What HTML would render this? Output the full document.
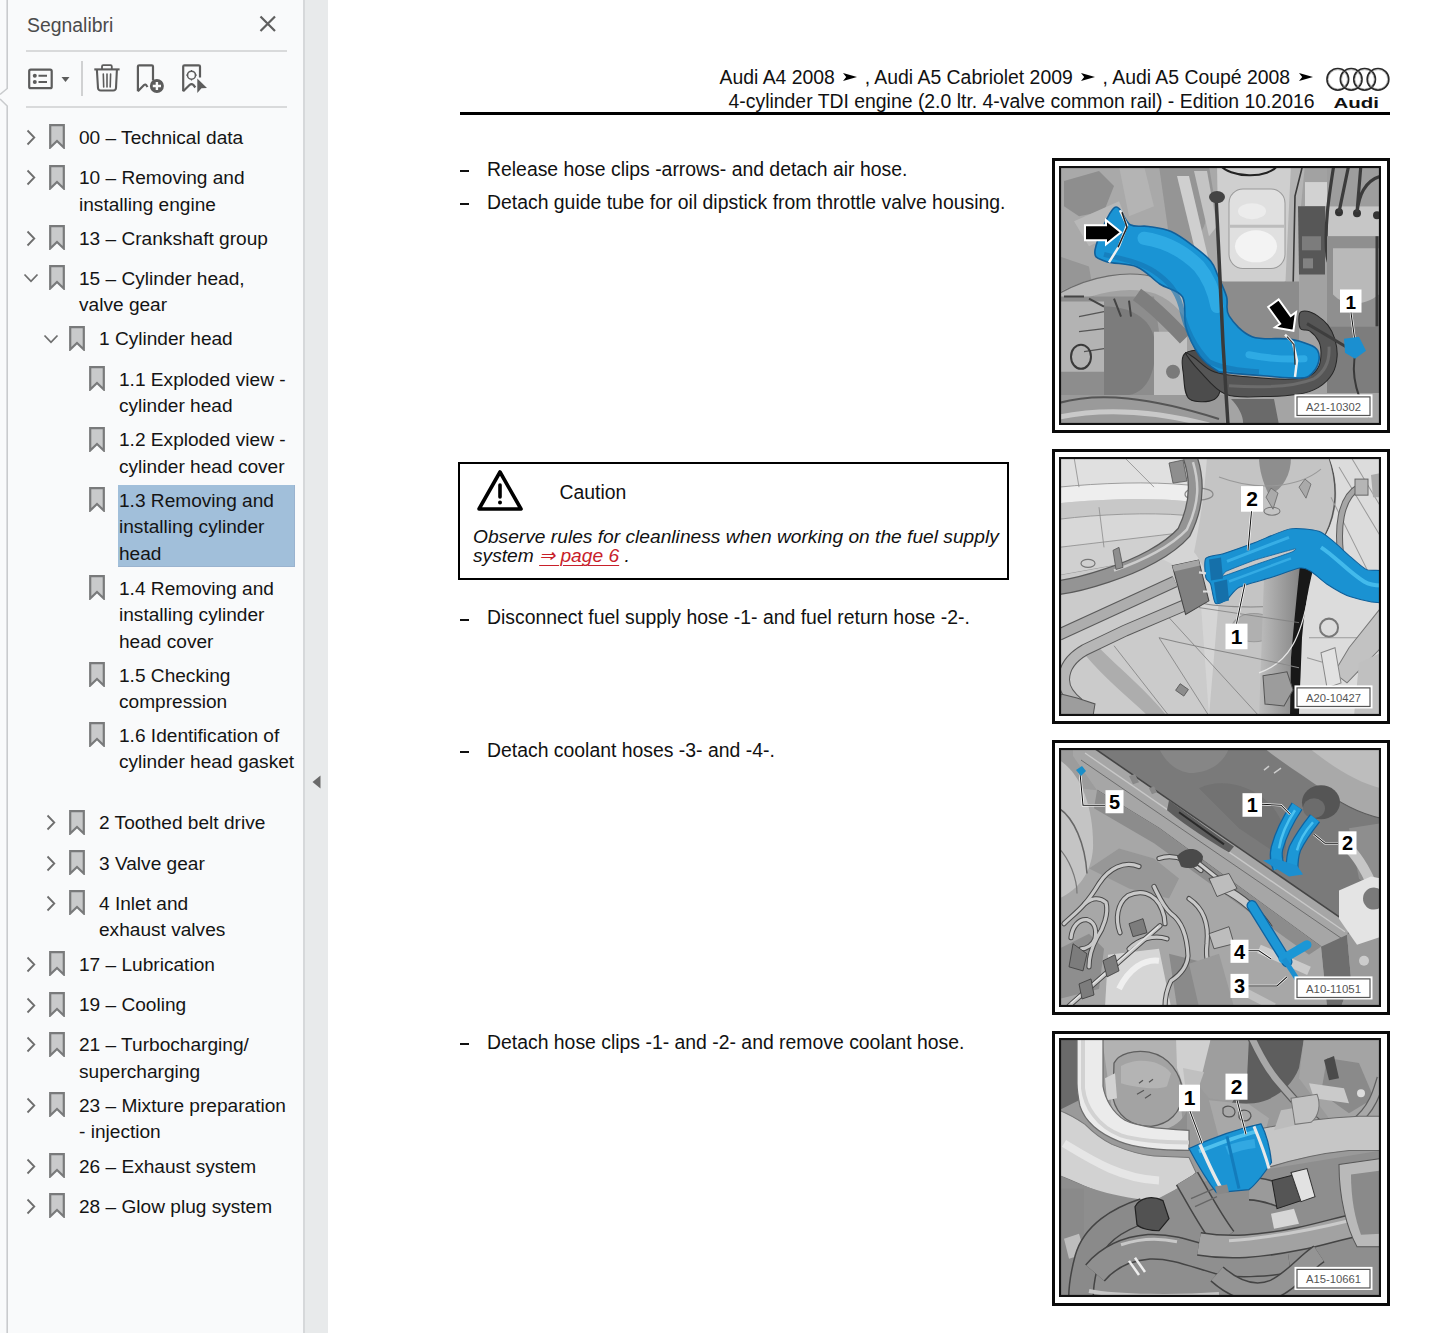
<!DOCTYPE html>
<html><head><meta charset="utf-8">
<style>
html,body{margin:0;padding:0;}
body{width:1445px;height:1333px;position:relative;overflow:hidden;background:#fff;font-family:"Liberation Sans",sans-serif;}
#side{position:absolute;left:0;top:0;width:303px;height:1333px;background:#f9fafb;}
#side .it{position:absolute;font-size:19.1px;line-height:26.5px;color:#141414;white-space:nowrap;}
#side svg{position:absolute;}
.sep{position:absolute;left:26px;width:261px;height:2px;background:#d9dadb;}
#div1{position:absolute;left:303px;top:0;width:2px;height:1333px;background:#d6d8da;}
#div2{position:absolute;left:305px;top:0;width:23px;height:1333px;background:#e8eaeb;}
#page{position:absolute;left:328px;top:0;width:1117px;height:1333px;background:#fff;}
.abs{position:absolute;}
.doc{position:absolute;font-size:19.4px;line-height:22px;color:#111;white-space:nowrap;}
.frame{position:absolute;border:3px solid #0a0a0a;background:#fff;box-sizing:border-box;}
.frame svg{position:absolute;}
</style></head><body>
<div id="side">
<svg style="left:0;top:0" width="10" height="1333" viewBox="0 0 10 1333"><path d="M7.2 0 V88.5 L0 94.5 M0 99 L7.2 106 V1333" fill="none" stroke="#c9cbcd" stroke-width="1.6"/></svg>
<div class="abs" style="left:27px;top:13px;font-size:19.4px;line-height:24px;color:#4b4b4b;">Segnalibri</div>
<svg style="left:258px;top:14px" width="20" height="20" viewBox="0 0 20 20"><path d="M2.5 2.5 L17 17 M17 2.5 L2.5 17" stroke="#5f5f5f" stroke-width="2.2" fill="none"/></svg>
<div class="sep" style="top:50px"></div>
<div class="sep" style="top:106px"></div>
<!-- toolbar -->
<svg style="left:26px;top:66px" width="46" height="26" viewBox="0 0 46 26"><rect x="3.2" y="3.7" width="22.5" height="18.5" rx="1.5" fill="none" stroke="#5c5c5c" stroke-width="2.2"/><circle cx="8.8" cy="9.8" r="2" fill="#5c5c5c"/><circle cx="8.8" cy="16" r="2" fill="#5c5c5c"/><path d="M12.5 9.8 H21 M12.5 16 H21" stroke="#5c5c5c" stroke-width="2"/><path d="M35.5 11 H43.5 L39.5 16 Z" fill="#5c5c5c"/></svg>
<div class="abs" style="left:81px;top:61px;width:1.5px;height:35px;background:#d0d1d2"></div>
<svg style="left:92px;top:62px" width="30" height="32" viewBox="0 0 30 32"><path d="M2.3 7.4 H27.6" stroke="#5c5c5c" stroke-width="2.1"/><path d="M10 7 V4.4 Q10 3.2 11.2 3.2 H18.6 Q19.8 3.2 19.8 4.4 V7" fill="none" stroke="#5c5c5c" stroke-width="1.8"/><path d="M4.9 8 L6 26 Q6.2 28.5 8.8 28.5 H21.2 Q23.8 28.5 24 26 L24.9 8" fill="none" stroke="#5c5c5c" stroke-width="2.1"/><path d="M11.3 12 L11.7 25 M15 12 V25 M18.6 12 L18.2 25" stroke="#5c5c5c" stroke-width="1.6" stroke-linecap="round"/></svg>
<svg style="left:134px;top:62px" width="32" height="34" viewBox="0 0 32 34"><path d="M3.9 29.2 V4.6 Q3.9 3.3 5.2 3.3 H17.7 Q19 3.3 19 4.6 V18.5" fill="none" stroke="#5c5c5c" stroke-width="2.2"/><path d="M3.9 29.2 L10 23 Q11.5 21.8 12.5 23.5 L13.5 25" fill="none" stroke="#5c5c5c" stroke-width="2.2"/><circle cx="22.9" cy="24" r="7" fill="#5c5c5c"/><path d="M22.9 19.9 V28.1 M18.8 24 H27" stroke="#f9fafb" stroke-width="2.4"/></svg>
<svg style="left:178px;top:62px" width="32" height="34" viewBox="0 0 32 34"><path d="M5.2 29.2 V4.6 Q5.2 3.3 6.5 3.3 H20.7 Q22 3.3 22 4.6 V15.5" fill="none" stroke="#5c5c5c" stroke-width="2.2"/><path d="M5.2 29.2 L11.5 23 Q13.5 21.3 15.5 23 L17.3 25.5" fill="none" stroke="#5c5c5c" stroke-width="2.2"/><circle cx="13.5" cy="13.2" r="4" fill="none" stroke="#5c5c5c" stroke-width="1.6"/><path d="M13.5 8 V9.5 M13.5 17 V18.4 M8.3 13.2 H9.7 M17.3 13.2 H18.7" stroke="#5c5c5c" stroke-width="1.2"/><path d="M19.3 16.5 L29 26 L23.5 26.3 L19.3 30.9 Z" fill="#5c5c5c"/></svg>
<!-- highlight -->
<div class="abs" style="left:117.5px;top:485px;width:177.7px;height:81.5px;background:#a1bfda;box-shadow:inset -1px -1px 0 #9ab3cf;"></div>

<svg class="chev" style="left:26px;top:129.1px" width="10" height="17" viewBox="0 0 10 17"><path d="M1.5 1.5 L8.3 8.5 L1.5 15.5" fill="none" stroke="#6e6e6e" stroke-width="1.8"/></svg>
<svg class="bm" style="left:49px;top:124.3px" width="16" height="25" viewBox="0 0 16 25"><path d="M1.2 1.2 H14.8 V23.5 L8 17 L1.2 23.5 Z" fill="#c9cacb" stroke="#797a7b" stroke-width="2.2" stroke-linejoin="miter"/></svg>
<div class="it" style="left:79px;top:124.9px">00 – Technical data</div>
<svg class="chev" style="left:26px;top:169.3px" width="10" height="17" viewBox="0 0 10 17"><path d="M1.5 1.5 L8.3 8.5 L1.5 15.5" fill="none" stroke="#6e6e6e" stroke-width="1.8"/></svg>
<svg class="bm" style="left:49px;top:164.5px" width="16" height="25" viewBox="0 0 16 25"><path d="M1.2 1.2 H14.8 V23.5 L8 17 L1.2 23.5 Z" fill="#c9cacb" stroke="#797a7b" stroke-width="2.2" stroke-linejoin="miter"/></svg>
<div class="it" style="left:79px;top:165.1px">10 – Removing and<br>installing engine</div>
<svg class="chev" style="left:26px;top:230.0px" width="10" height="17" viewBox="0 0 10 17"><path d="M1.5 1.5 L8.3 8.5 L1.5 15.5" fill="none" stroke="#6e6e6e" stroke-width="1.8"/></svg>
<svg class="bm" style="left:49px;top:225.2px" width="16" height="25" viewBox="0 0 16 25"><path d="M1.2 1.2 H14.8 V23.5 L8 17 L1.2 23.5 Z" fill="#c9cacb" stroke="#797a7b" stroke-width="2.2" stroke-linejoin="miter"/></svg>
<div class="it" style="left:79px;top:225.8px">13 – Crankshaft group</div>
<svg class="chev" style="left:23px;top:273.3px" width="16" height="10" viewBox="0 0 16 10"><path d="M1.5 1.5 L8 8.3 L14.5 1.5" fill="none" stroke="#6e6e6e" stroke-width="1.8"/></svg>
<svg class="bm" style="left:49px;top:265.0px" width="16" height="25" viewBox="0 0 16 25"><path d="M1.2 1.2 H14.8 V23.5 L8 17 L1.2 23.5 Z" fill="#c9cacb" stroke="#797a7b" stroke-width="2.2" stroke-linejoin="miter"/></svg>
<div class="it" style="left:79px;top:265.6px">15 – Cylinder head,<br>valve gear</div>
<svg class="chev" style="left:43px;top:334.1px" width="16" height="10" viewBox="0 0 16 10"><path d="M1.5 1.5 L8 8.3 L14.5 1.5" fill="none" stroke="#6e6e6e" stroke-width="1.8"/></svg>
<svg class="bm" style="left:69px;top:325.8px" width="16" height="25" viewBox="0 0 16 25"><path d="M1.2 1.2 H14.8 V23.5 L8 17 L1.2 23.5 Z" fill="#c9cacb" stroke="#797a7b" stroke-width="2.2" stroke-linejoin="miter"/></svg>
<div class="it" style="left:99px;top:326.4px">1 Cylinder head</div>
<svg class="bm" style="left:89px;top:366.0px" width="16" height="25" viewBox="0 0 16 25"><path d="M1.2 1.2 H14.8 V23.5 L8 17 L1.2 23.5 Z" fill="#c9cacb" stroke="#797a7b" stroke-width="2.2" stroke-linejoin="miter"/></svg>
<div class="it" style="left:119px;top:366.6px">1.1 Exploded view -<br>cylinder head</div>
<svg class="bm" style="left:89px;top:426.7px" width="16" height="25" viewBox="0 0 16 25"><path d="M1.2 1.2 H14.8 V23.5 L8 17 L1.2 23.5 Z" fill="#c9cacb" stroke="#797a7b" stroke-width="2.2" stroke-linejoin="miter"/></svg>
<div class="it" style="left:119px;top:427.3px">1.2 Exploded view -<br>cylinder head cover</div>
<svg class="bm" style="left:89px;top:487.2px" width="16" height="25" viewBox="0 0 16 25"><path d="M1.2 1.2 H14.8 V23.5 L8 17 L1.2 23.5 Z" fill="#c9cacb" stroke="#797a7b" stroke-width="2.2" stroke-linejoin="miter"/></svg>
<div class="it" style="left:119px;top:487.8px">1.3 Removing and<br>installing cylinder<br>head</div>
<svg class="bm" style="left:89px;top:575.2px" width="16" height="25" viewBox="0 0 16 25"><path d="M1.2 1.2 H14.8 V23.5 L8 17 L1.2 23.5 Z" fill="#c9cacb" stroke="#797a7b" stroke-width="2.2" stroke-linejoin="miter"/></svg>
<div class="it" style="left:119px;top:575.8px">1.4 Removing and<br>installing cylinder<br>head cover</div>
<svg class="bm" style="left:89px;top:662.1px" width="16" height="25" viewBox="0 0 16 25"><path d="M1.2 1.2 H14.8 V23.5 L8 17 L1.2 23.5 Z" fill="#c9cacb" stroke="#797a7b" stroke-width="2.2" stroke-linejoin="miter"/></svg>
<div class="it" style="left:119px;top:662.7px">1.5 Checking<br>compression</div>
<svg class="bm" style="left:89px;top:722.2px" width="16" height="25" viewBox="0 0 16 25"><path d="M1.2 1.2 H14.8 V23.5 L8 17 L1.2 23.5 Z" fill="#c9cacb" stroke="#797a7b" stroke-width="2.2" stroke-linejoin="miter"/></svg>
<div class="it" style="left:119px;top:722.8px">1.6 Identification of<br>cylinder head gasket</div>
<svg class="chev" style="left:46px;top:814.3px" width="10" height="17" viewBox="0 0 10 17"><path d="M1.5 1.5 L8.3 8.5 L1.5 15.5" fill="none" stroke="#6e6e6e" stroke-width="1.8"/></svg>
<svg class="bm" style="left:69px;top:809.5px" width="16" height="25" viewBox="0 0 16 25"><path d="M1.2 1.2 H14.8 V23.5 L8 17 L1.2 23.5 Z" fill="#c9cacb" stroke="#797a7b" stroke-width="2.2" stroke-linejoin="miter"/></svg>
<div class="it" style="left:99px;top:810.1px">2 Toothed belt drive</div>
<svg class="chev" style="left:46px;top:855.0px" width="10" height="17" viewBox="0 0 10 17"><path d="M1.5 1.5 L8.3 8.5 L1.5 15.5" fill="none" stroke="#6e6e6e" stroke-width="1.8"/></svg>
<svg class="bm" style="left:69px;top:850.2px" width="16" height="25" viewBox="0 0 16 25"><path d="M1.2 1.2 H14.8 V23.5 L8 17 L1.2 23.5 Z" fill="#c9cacb" stroke="#797a7b" stroke-width="2.2" stroke-linejoin="miter"/></svg>
<div class="it" style="left:99px;top:850.8px">3 Valve gear</div>
<svg class="chev" style="left:46px;top:895.1px" width="10" height="17" viewBox="0 0 10 17"><path d="M1.5 1.5 L8.3 8.5 L1.5 15.5" fill="none" stroke="#6e6e6e" stroke-width="1.8"/></svg>
<svg class="bm" style="left:69px;top:890.3px" width="16" height="25" viewBox="0 0 16 25"><path d="M1.2 1.2 H14.8 V23.5 L8 17 L1.2 23.5 Z" fill="#c9cacb" stroke="#797a7b" stroke-width="2.2" stroke-linejoin="miter"/></svg>
<div class="it" style="left:99px;top:890.9px">4 Inlet and<br>exhaust valves</div>
<svg class="chev" style="left:26px;top:955.9px" width="10" height="17" viewBox="0 0 10 17"><path d="M1.5 1.5 L8.3 8.5 L1.5 15.5" fill="none" stroke="#6e6e6e" stroke-width="1.8"/></svg>
<svg class="bm" style="left:49px;top:951.1px" width="16" height="25" viewBox="0 0 16 25"><path d="M1.2 1.2 H14.8 V23.5 L8 17 L1.2 23.5 Z" fill="#c9cacb" stroke="#797a7b" stroke-width="2.2" stroke-linejoin="miter"/></svg>
<div class="it" style="left:79px;top:951.7px">17 – Lubrication</div>
<svg class="chev" style="left:26px;top:996.6px" width="10" height="17" viewBox="0 0 10 17"><path d="M1.5 1.5 L8.3 8.5 L1.5 15.5" fill="none" stroke="#6e6e6e" stroke-width="1.8"/></svg>
<svg class="bm" style="left:49px;top:991.8px" width="16" height="25" viewBox="0 0 16 25"><path d="M1.2 1.2 H14.8 V23.5 L8 17 L1.2 23.5 Z" fill="#c9cacb" stroke="#797a7b" stroke-width="2.2" stroke-linejoin="miter"/></svg>
<div class="it" style="left:79px;top:992.4px">19 – Cooling</div>
<svg class="chev" style="left:26px;top:1036.3px" width="10" height="17" viewBox="0 0 10 17"><path d="M1.5 1.5 L8.3 8.5 L1.5 15.5" fill="none" stroke="#6e6e6e" stroke-width="1.8"/></svg>
<svg class="bm" style="left:49px;top:1031.5px" width="16" height="25" viewBox="0 0 16 25"><path d="M1.2 1.2 H14.8 V23.5 L8 17 L1.2 23.5 Z" fill="#c9cacb" stroke="#797a7b" stroke-width="2.2" stroke-linejoin="miter"/></svg>
<div class="it" style="left:79px;top:1032.1px">21 – Turbocharging/<br>supercharging</div>
<svg class="chev" style="left:26px;top:1097.1px" width="10" height="17" viewBox="0 0 10 17"><path d="M1.5 1.5 L8.3 8.5 L1.5 15.5" fill="none" stroke="#6e6e6e" stroke-width="1.8"/></svg>
<svg class="bm" style="left:49px;top:1092.3px" width="16" height="25" viewBox="0 0 16 25"><path d="M1.2 1.2 H14.8 V23.5 L8 17 L1.2 23.5 Z" fill="#c9cacb" stroke="#797a7b" stroke-width="2.2" stroke-linejoin="miter"/></svg>
<div class="it" style="left:79px;top:1092.9px">23 – Mixture preparation<br>- injection</div>
<svg class="chev" style="left:26px;top:1158.2px" width="10" height="17" viewBox="0 0 10 17"><path d="M1.5 1.5 L8.3 8.5 L1.5 15.5" fill="none" stroke="#6e6e6e" stroke-width="1.8"/></svg>
<svg class="bm" style="left:49px;top:1153.4px" width="16" height="25" viewBox="0 0 16 25"><path d="M1.2 1.2 H14.8 V23.5 L8 17 L1.2 23.5 Z" fill="#c9cacb" stroke="#797a7b" stroke-width="2.2" stroke-linejoin="miter"/></svg>
<div class="it" style="left:79px;top:1154.0px">26 – Exhaust system</div>
<svg class="chev" style="left:26px;top:1198.2px" width="10" height="17" viewBox="0 0 10 17"><path d="M1.5 1.5 L8.3 8.5 L1.5 15.5" fill="none" stroke="#6e6e6e" stroke-width="1.8"/></svg>
<svg class="bm" style="left:49px;top:1193.4px" width="16" height="25" viewBox="0 0 16 25"><path d="M1.2 1.2 H14.8 V23.5 L8 17 L1.2 23.5 Z" fill="#c9cacb" stroke="#797a7b" stroke-width="2.2" stroke-linejoin="miter"/></svg>
<div class="it" style="left:79px;top:1194.0px">28 – Glow plug system</div>
</div>
<div id="div1"></div>
<div id="div2"></div>
<svg style="position:absolute;left:311px;top:774px" width="10" height="16" viewBox="0 0 10 16"><path d="M9.5 1.5 V14.5 L1.5 8 Z" fill="#6a6a6a"/></svg>

<!-- page header -->
<div class="doc" id="h1" style="right:130.5px;top:66.3px;text-align:right">Audi A4 2008 <svg class="arr" width="14" height="8" viewBox="0 0 14 8" style="position:relative;display:inline-block;vertical-align:3px;margin:0 2px 0 3px"><path d="M0 0 L14 4 L0 8 L3.2 4 Z" fill="#000"/></svg> , Audi A5 Cabriolet 2009 <svg class="arr" width="14" height="8" viewBox="0 0 14 8" style="position:relative;display:inline-block;vertical-align:3px;margin:0 2px 0 3px"><path d="M0 0 L14 4 L0 8 L3.2 4 Z" fill="#000"/></svg> , Audi A5 Coupé 2008 <svg class="arr" width="14" height="8" viewBox="0 0 14 8" style="position:relative;display:inline-block;vertical-align:3px;margin:0 2px 0 3px"><path d="M0 0 L14 4 L0 8 L3.2 4 Z" fill="#000"/></svg></div>
<div class="doc" id="h2" style="right:130.5px;top:90px;text-align:right">4-cylinder TDI engine (2.0 ltr. 4-valve common rail) - Edition 10.2016</div>
<div class="abs" style="left:459.5px;top:111.6px;width:930.5px;height:3px;background:#000"></div>
<!-- bullets -->
<div class="abs" style="left:460.4px;top:170.2px;width:9px;height:2.1px;background:#111"></div><div class="doc" style="left:487px;top:158.4px">Release hose clips -arrows- and detach air hose.</div>
<div class="abs" style="left:460.4px;top:202.7px;width:9px;height:2.1px;background:#111"></div><div class="doc" style="left:487px;top:190.9px">Detach guide tube for oil dipstick from throttle valve housing.</div>
<div class="abs" style="left:460.4px;top:618.8px;width:9px;height:2.1px;background:#111"></div><div class="doc" style="left:487px;top:606.4px">Disconnect fuel supply hose -1- and fuel return hose -2-.</div>
<div class="abs" style="left:460.4px;top:751.2px;width:9px;height:2.1px;background:#111"></div><div class="doc" style="left:487px;top:739.4px">Detach coolant hoses -3- and -4-.</div>
<div class="abs" style="left:460.4px;top:1042.6px;width:9px;height:2.1px;background:#111"></div><div class="doc" style="left:487px;top:1030.6px">Detach hose clips -1- and -2- and remove coolant hose.</div>
<!-- caution -->
<div class="abs" style="left:457.9px;top:462.4px;width:551.2px;height:117.4px;border:2.7px solid #000;box-sizing:border-box;"></div>
<svg style="position:absolute;left:476px;top:469px" width="48" height="43" viewBox="0 0 48 43"><path d="M24 3 L45 40 H3 Z" fill="none" stroke="#000" stroke-width="3.6" stroke-linejoin="round"/><path d="M24 16 V28" stroke="#000" stroke-width="3.6" stroke-linecap="round"/><circle cx="24" cy="33.5" r="2" fill="#000"/></svg>
<div class="doc" style="left:559.5px;top:481.4px">Caution</div>
<div class="doc" style="left:473px;top:527px;font-size:19.2px;font-style:italic;line-height:19.3px">Observe rules for cleanliness when working on the fuel supply<br>system <span style="color:#c8202a;text-decoration:underline;text-underline-offset:3px;text-decoration-thickness:1.3px">⇒ page 6</span> .</div>
<!-- audi logo -->
<svg style="position:absolute;left:1324px;top:65px" width="68" height="46" viewBox="0 0 68 46">
<g fill="none" stroke="#2a2a2a" stroke-width="1.7"><circle cx="13.8" cy="14.3" r="10.8"/><circle cx="27.2" cy="14.3" r="10.8"/><circle cx="40.6" cy="14.3" r="10.8"/><circle cx="54" cy="14.3" r="10.8"/></g>
<g fill="none" stroke="#9a9a9a" stroke-width="0.6"><circle cx="13.8" cy="14.3" r="9.6"/><circle cx="27.2" cy="14.3" r="9.6"/><circle cx="40.6" cy="14.3" r="9.6"/><circle cx="54" cy="14.3" r="9.6"/></g>
<text x="9.5" y="42.5" font-family="Liberation Sans" font-weight="bold" font-size="15.5" fill="#111" textLength="45.5" lengthAdjust="spacingAndGlyphs">Audi</text>
</svg>

<div class="frame" style="left:1052px;top:158px;width:338px;height:275.4px"><div style="position:absolute;left:4.4px;top:4.7px;width:322px;height:259px;overflow:hidden"><svg width="322" height="259" viewBox="0 0 322 258" preserveAspectRatio="none">
<rect width="322" height="258" fill="#a2a2a2"/>
<!-- top-left busy area -->
<path d="M0 0 H160 V120 H0 Z" fill="#a9a9a9"/>
<path d="M5 15 L40 5 L55 20 L45 45 L20 50 L5 40 Z" fill="#8e8e8e"/>
<path d="M15 55 L60 35 L70 60 L30 80 Z" fill="#b8b8b8"/>
<path d="M60 0 H85 L95 40 L70 50 Z" fill="#b4b4b4"/>
<path d="M100 0 L150 0 L155 30 L145 60 L130 90 L110 70 Z" fill="#959595"/>
<path d="M118 10 L130 10 L150 95 L140 100 Z" fill="#cfcfcf"/>
<path d="M135 5 L148 5 L158 60 L150 70 Z" fill="#c4c4c4"/>
<path d="M0 90 L30 100 L35 130 L0 150 Z" fill="#969696"/>
<!-- light gray hose left-middle -->
<path d="M0 135 C30 118 70 110 100 120 C120 128 135 145 140 165" fill="none" stroke="#b9b9b9" stroke-width="16"/>
<path d="M0 135 C30 118 70 110 100 120 C120 128 135 145 140 165" fill="none" stroke="#6c6c6c" stroke-width="1.2" transform="translate(0,-8)"/>
<!-- reservoir -->
<path d="M158 -2 H232 L236 30 L231 112 L216 121 L172 121 L160 112 Z" fill="#cfcfcf"/>
<path d="M160 -2 C170 12 210 14 220 -2" fill="none" stroke="#222" stroke-width="2"/>
<rect x="170" y="23" width="56" height="79" rx="14" fill="#e0e0e0" stroke="#9a9a9a" stroke-width="1"/>
<path d="M171 60 H225" stroke="#bdbdbd" stroke-width="3"/>
<ellipse cx="197" cy="80" rx="21" ry="16" fill="#f3f3f3"/>
<ellipse cx="193" cy="45" rx="14" ry="8" fill="#ececec"/>
<!-- channel right of reservoir -->
<path d="M232 -2 H246 L242 40 L240 125 H226 Z" fill="#b4b4b4"/>
<path d="M244 -2 L236 30 L234 125" fill="none" stroke="#3a3a3a" stroke-width="1.6"/>
<!-- light box -->
<path d="M246 16 H272 V40 H246 Z" fill="#d2d2d2"/>
<!-- dark connector -->
<path d="M239 40 H266 V108 H240 Z" fill="#575757"/>
<rect x="243" y="70" width="19" height="14" fill="#7c7c7c"/>
<rect x="244" y="92" width="10" height="10" fill="#828282"/>
<!-- ABS unit -->
<path d="M270 40 H322 V70 H268 Z" fill="#c6c6c6"/>
<path d="M268 -2 H322 V40 H268 Z" fill="#9d9d9d"/>
<circle cx="280" cy="46" r="4" fill="#333"/><circle cx="298" cy="47" r="4" fill="#333"/><circle cx="318" cy="49" r="4" fill="#333"/>
<path d="M275 -2 C270 30 265 60 268 90 C270 105 285 110 290 100 V75" fill="none" stroke="#3b3b3b" stroke-width="3.2"/>
<path d="M290 -2 L280 46 M302 -2 L298 46 M322 10 C305 15 300 30 298 46" fill="none" stroke="#3b3b3b" stroke-width="3.2"/>
<!-- right middle region -->
<path d="M268 70 H322 V160 H268 Z" fill="#8f8f8f"/>
<path d="M274 82 H320 V128 C305 140 285 140 274 128 Z" fill="#b9b9b9"/>
<path d="M318 70 V160" stroke="#3b3b3b" stroke-width="3"/>
<!-- between reservoir and dark hose -->
<path d="M160 115 H240 V175 H172 Z" fill="#8c8c8c"/>
<!-- alternator -->
<path d="M0 130 L95 130 L110 235 L0 235 Z" fill="#8d8d8d"/>
<path d="M0 135 H45 V205 H0 Z" fill="#b3b3b3"/>
<path d="M45 140 C70 140 92 150 96 175 C98 200 90 225 70 228 L45 228 Z" fill="#7c7c7c"/>
<path d="M20 150 L45 145 M20 165 L45 162 M25 185 L45 182" stroke="#555" stroke-width="1.2"/>
<ellipse cx="22" cy="190" rx="10" ry="12" fill="none" stroke="#3a3a3a" stroke-width="2"/>
<path d="M5 130 L25 130 M30 132 L45 140 M55 132 L62 150 M70 134 L72 150" stroke="#444" stroke-width="2"/>
<!-- light center-bottom area -->
<path d="M95 165 H128 V232 H95 Z" fill="#c2c2c2"/>
<circle cx="114" cy="205" r="7" fill="#7a7a7a"/>
<!-- bottom strip -->
<path d="M0 228 H170 V258 H0 Z" fill="#9a9a9a"/>
<path d="M0 236 C40 225 90 230 160 252" fill="none" stroke="#555" stroke-width="2"/>
<path d="M0 250 C50 240 100 245 150 258" fill="none" stroke="#c9c9c9" stroke-width="5"/>
<!-- grey hose above alternator -->
<path d="M78 128 C95 140 110 155 126 172" fill="none" stroke="#7e7e7e" stroke-width="14"/>
<!-- dark vertical piece -->
<path d="M126 188 L150 182 L160 215 L155 232 L130 232 Z" fill="#4f4f4f"/>
<!-- bottom right -->
<path d="M166 226 H322 V258 H166 Z" fill="#a4a4a4"/>
<path d="M172 232 C180 240 185 250 184 258 L220 258 L215 232 Z" fill="#6a6a6a"/>
<path d="M268 160 H322 V226 H268 Z" fill="#7d7d7d"/>
<path d="M300 175 C290 200 295 225 310 250" fill="none" stroke="#3a3a3a" stroke-width="2"/>
<!-- dark hose -->
<path d="M126.6 186.3 C132.4 182.5 153.6 181.6 159.6 186.3 C165.6 191.0 163.3 206.6 162.6 214.3 C161.9 222.0 160.9 229.3 155.6 232.3 C150.3 235.3 135.8 236.1 130.6 232.3 C125.4 228.5 125.3 217.0 124.6 209.3 C123.9 201.6 120.8 190.1 126.6 186.3 Z" fill="#4c4c4c" stroke="#222" stroke-width="1"/>
<path d="M126.6 186.3 C127.4 188.5 133.9 197.5 140.6 204.3 C147.3 211.2 155.9 223.2 166.6 227.4 C177.3 231.6 192.5 229.7 204.6 229.7 C216.7 229.7 229.8 228.9 239.0 227.4 C248.2 225.9 253.8 224.0 259.6 220.5 C265.3 217.0 270.4 211.9 273.5 206.7 C276.6 201.5 277.7 195.2 278.1 189.5 C278.5 183.8 277.3 177.5 275.8 172.3 C274.3 167.1 271.8 162.3 268.9 158.5 C266.0 154.7 262.0 151.6 258.6 149.3 C255.1 147.0 251.2 145.1 248.2 144.7 C245.2 144.3 241.7 144.1 240.6 147.0 C239.4 149.9 239.6 159.0 241.3 161.9 C242.9 164.8 247.4 162.1 250.5 164.2 C253.6 166.3 257.8 170.9 259.7 174.5 C261.6 178.1 262.0 181.8 262.0 186.0 C262.0 190.2 261.6 196.0 259.7 199.8 C257.8 203.6 255.3 206.9 250.5 209.0 C245.7 211.1 240.6 212.1 230.6 212.3 C220.6 212.5 203.1 211.5 190.6 210.3 C178.1 209.1 164.8 208.5 155.6 205.3 C146.4 202.1 140.4 194.5 135.6 191.3 C130.8 188.1 125.8 184.1 126.6 186.3 Z" fill="#555" stroke="#262626" stroke-width="1"/>
<path d="M170 219 C200 221 235 220 255 212 C266 205 271 195 270 180" fill="none" stroke="#6c6c6c" stroke-width="3"/>
<path d="M248 157 L287 180" stroke="#3e3e3e" stroke-width="3"/>
<!-- blue hose -->
<path d="M55.4 41.4 C61.2 37.3 65.5 55.4 71.2 58.5 C76.9 61.6 82.6 59.1 89.4 60.2 C96.2 61.3 104.5 62.0 112.1 65.3 C119.7 68.6 128.2 75.1 134.8 80.0 C141.4 84.9 147.8 90.0 151.8 94.8 C155.8 99.6 156.0 102.7 158.6 108.6 C161.2 114.5 165.7 123.5 167.6 130.3 C169.5 137.1 165.8 142.7 170.1 149.3 C174.3 155.9 183.1 166.2 193.1 170.0 C203.0 173.8 220.2 171.0 229.8 172.3 C239.4 173.6 245.8 176.1 250.6 178.0 C255.4 179.9 257.1 180.8 258.6 183.7 C260.1 186.6 260.6 191.5 259.6 195.3 C258.6 199.1 255.8 204.0 252.8 206.7 C249.7 209.4 249.3 210.9 241.3 211.3 C233.3 211.7 217.0 209.9 204.6 209.0 C192.1 208.1 174.4 206.5 166.6 205.6 C158.7 204.7 161.8 206.3 157.5 203.5 C153.2 200.7 145.6 195.9 140.5 188.7 C135.4 181.5 129.7 170.0 126.9 160.3 C124.1 150.6 127.8 137.4 123.5 130.3 C119.2 123.2 108.4 122.5 100.8 117.5 C93.2 112.5 87.2 104.3 78.1 100.5 C69.0 96.7 53.3 97.7 46.3 94.8 C39.3 92.0 34.6 92.3 36.1 83.4 C37.6 74.5 49.5 45.6 55.4 41.4 Z" fill="#1a94d4" stroke="#12609a" stroke-width="1.6"/>
<path d="M85 72 C105 75 125 85 140 100 C150 112 155 125 158 140" fill="none" stroke="#36b2ea" stroke-width="13" stroke-linecap="round" opacity="0.75"/>
<path d="M190 188 C210 192 228 193 245 192" fill="none" stroke="#36b2ea" stroke-width="7" stroke-linecap="round" opacity="0.75"/>
<path d="M45 88 C60 92 80 95 95 105 C110 115 118 125 122 140 C126 160 135 180 150 195 C165 202 180 204 200 205" fill="none" stroke="#1473b0" stroke-width="5" opacity="0.6"/>
<!-- clips -->
<path d="M61 44 L68 59 L60 80 L50 96" fill="none" stroke="#f0f0f0" stroke-width="2.5"/>
<path d="M63 46 L68 61 L59 81" fill="none" stroke="#222" stroke-width="1.5"/>
<path d="M226 168 L234 176 L238 194 L236 210" fill="none" stroke="#f0f0f0" stroke-width="2.5"/>
<path d="M228 170 L235 178 L236 198" fill="none" stroke="#333" stroke-width="1.3"/>
<!-- dipstick -->
<path d="M157 30 L159.5 80 L164 177 L169 258" fill="none" stroke="#3a3a3a" stroke-width="3.5"/>
<ellipse cx="158" cy="31" rx="8" ry="6" fill="#444"/>
<!-- arrows -->
<path d="M26 59 L47 59 L47 54 L62 66 L47 78 L47 74 L26 74 Z" fill="#000" stroke="#fff" stroke-width="2"/>
<g transform="translate(234.4,164.2) rotate(54)"><path d="M0 0 L-13.5 -13 L-13.5 -6.5 L-34 -6.5 L-34 6.5 L-13.5 6.5 L-13.5 13 Z" fill="#000" stroke="#fff" stroke-width="2"/></g>
<!-- label 1 -->
<rect x="281" y="123" width="21.5" height="23" fill="#fff"/>
<text x="291.8" y="142" font-family="Liberation Sans" font-weight="bold" font-size="19" text-anchor="middle" fill="#000">1</text>
<path d="M292 146 L296 175" stroke="#fff" stroke-width="2.4"/><path d="M292 146 L296 175" stroke="#111" stroke-width="1"/>
<path d="M285 172 L300 170 L307 184 L296 192 L286 186 Z" fill="#1b8fd0"/>
<!-- label box -->
<rect x="235.5" y="227.5" width="78" height="23" fill="#fff"/>
<rect x="238" y="230" width="73" height="18.5" fill="#fff" stroke="#555" stroke-width="1.2"/>
<text x="274.5" y="244" font-family="Liberation Sans" font-size="11" text-anchor="middle" fill="#555" textLength="55" lengthAdjust="spacingAndGlyphs">A21-10302</text>
<rect x="1" y="1" width="320" height="256" fill="none" stroke="#111" stroke-width="2.2"/>
</svg>
</div></div>
<div class="frame" style="left:1052px;top:449px;width:338px;height:275.4px"><div style="position:absolute;left:4.4px;top:4.7px;width:322px;height:259px;overflow:hidden"><svg width="322" height="259" viewBox="0 0 322 258" preserveAspectRatio="none">
<defs>
<linearGradient id="g2s" x1="0" y1="0" x2="1" y2="0"><stop offset="0" stop-color="#bdbdbd"/><stop offset="0.6" stop-color="#8a8a8a"/><stop offset="1" stop-color="#3a3a3a"/></linearGradient>
</defs>
<rect width="322" height="258" fill="#d5d5d5"/>
<!-- top light bands -->
<path d="M0 0 H130 V28 C90 24 40 26 0 30 Z" fill="#e0e0e0"/>
<path d="M0 30 C40 26 90 24 130 28 L128 44 C90 40 40 42 0 46 Z" fill="#eeeeee"/>
<path d="M0 46 C40 42 90 40 128 44 L125 58 C90 55 40 57 0 62 Z" fill="#c8c8c8"/>
<path d="M0 62 C40 57 90 55 125 58 L118 76 L0 90 Z" fill="#d8d8d8"/>
<path d="M0 90 L118 76 L100 100 L0 118 Z" fill="#d0d0d0"/>
<path d="M15 0 L20 30 M65 0 L95 30 M0 30 C40 26 90 24 130 28 M0 62 C40 57 90 55 125 58 M0 90 L118 76 M0 118 L100 100 M40 50 L45 90" fill="none" stroke="#8c8c8c" stroke-width="0.8"/>
<ellipse cx="29" cy="106" rx="7" ry="4" fill="none" stroke="#777" stroke-width="1.2"/>
<!-- tank blob -->
<path d="M148 0 H270 C282 30 280 60 262 85 C250 110 240 140 236 175 L236 258 H150 L160 140 C150 120 140 100 135 95 C142 60 146 30 148 0 Z" fill="#c4c4c4"/>
<path d="M200 0 H232 C232 18 224 32 210 38 C204 26 200 12 200 0 Z" fill="#8e8e8e"/>
<path d="M160 20 C200 35 240 30 262 12" fill="none" stroke="#999" stroke-width="1"/>
<path d="M262 85 C278 60 280 30 270 0" fill="none" stroke="#555" stroke-width="1.5"/>
<ellipse cx="140" cy="37" rx="14" ry="6" fill="none" stroke="#888" stroke-width="1.2"/>
<path d="M207 40 L212 31 L219 36 L214 52 Z" fill="#aaaaaa" stroke="#666" stroke-width="0.8"/>
<path d="M240 30 L246 22 L252 27 L247 41 Z" fill="#aaaaaa" stroke="#666" stroke-width="0.8"/>
<ellipse cx="213" cy="54" rx="8" ry="4" fill="none" stroke="#777" stroke-width="1"/>
<path d="M140 145 C160 150 200 150 236 148" fill="none" stroke="#888" stroke-width="1"/>
<ellipse cx="195" cy="170" rx="22" ry="14" fill="#b0b0b0" stroke="#999" stroke-width="1"/>
<!-- shadow gradient + dark band -->
<path d="M205 120 L262 85 C252 115 246 145 243 180 L240 258 H200 Z" fill="url(#g2s)"/>
<path d="M256 100 C250 135 246 170 243 200 L240 258 H231 L232 200 C235 165 238 135 241 108 Z" fill="#181818"/>
<path d="M250 135 C242 180 230 205 200 215" fill="none" stroke="#e6e6e6" stroke-width="1.2"/>
<!-- right region -->
<path d="M270 0 H322 V258 H240 L243 180 C246 145 252 115 262 85 C280 60 282 30 270 0 Z" fill="#dcdcdc"/>
<path d="M280 10 L322 80 M292 0 L322 50 M272 40 L322 140 M250 180 H322 M248 200 L300 215" stroke="#9a9a9a" stroke-width="1"/>
<path d="M300 30 C282 40 276 70 284 112" fill="none" stroke="#5e5e5e" stroke-width="7"/>
<path d="M300 30 C282 40 276 70 284 112" fill="none" stroke="#a6a6a6" stroke-width="5"/>
<rect x="296" y="22" width="13" height="16" fill="#b5b5b5" stroke="#666" stroke-width="1"/>
<path d="M312 18 L322 16 V40 L314 40 Z" fill="#aaa"/>
<path d="M322 150 L290 190 L275 215 L288 225 L322 190 Z" fill="#c2c2c2" stroke="#777" stroke-width="1"/>
<circle cx="270" cy="170" r="9" fill="none" stroke="#777" stroke-width="2"/>
<path d="M262 195 L276 190 L282 225 L268 230 Z" fill="#e2e2e2" stroke="#888" stroke-width="1"/>
<path d="M300 205 L322 195 V258 H295 Z" fill="#c0c0c0"/>
<!-- fitting blob -->
<path d="M204 218 L228 214 L234 232 L225 248 L206 246 Z" fill="#9c9c9c" stroke="#555" stroke-width="1"/>
<!-- lower-left background -->
<path d="M0 118 L100 100 L140 120 L150 258 H0 Z" fill="#cbcbcb"/>
<path d="M26 197 C45 220 70 240 89 258 L108 258 C90 235 60 210 40 190 Z" fill="#adadad"/>
<path d="M55 188 L110 258 M110 160 L200 258 M100 180 L150 258 M140 150 L240 165" stroke="#808080" stroke-width="0.8"/>
<path d="M100 180 C140 190 200 200 240 210" fill="none" stroke="#888" stroke-width="1"/>
<rect x="118" y="228" width="10" height="8" transform="rotate(35 123 232)" fill="#8c8c8c" stroke="#555" stroke-width="0.8"/>
<!-- gray hose -->
<path d="M131 0 C138 20 140 45 125 75 C110 92 80 108 48 118 C30 124 15 128 0 130" fill="none" stroke="#5a5a5a" stroke-width="15"/>
<path d="M131 0 C138 20 140 45 125 75 C110 92 80 108 48 118 C30 124 15 128 0 130" fill="none" stroke="#949494" stroke-width="12.5"/>
<path d="M134 5 C140 25 141 45 128 72 C113 88 85 103 55 113" fill="none" stroke="#d2d2d2" stroke-width="2.5" opacity="0.9"/>
<path d="M110 6 L124 3 L128 24 L114 26 Z" fill="#8e8e8e" stroke="#555" stroke-width="0.8"/>
<path d="M54 93 L60 90 L64 110 L57 112 Z" fill="#8e8e8e" stroke="#555" stroke-width="0.8"/>
<!-- tubes -->
<path d="M0 177 L116 124" stroke="#5a5a5a" stroke-width="12"/>
<path d="M0 177 L116 124" stroke="#adadad" stroke-width="10"/>
<path d="M125 148 L66 173 L26 192 C12 200 5 210 5 222 C5 232 12 240 20 246" fill="none" stroke="#5a5a5a" stroke-width="12"/>
<path d="M125 148 L66 173 L26 192 C12 200 5 210 5 222 C5 232 12 240 20 246" fill="none" stroke="#b6b6b6" stroke-width="10"/>
<path d="M2 236 L18 240 L36 246 L34 258 H0 Z" fill="#9d9d9d" stroke="#555" stroke-width="1"/>
<!-- connector block -->
<path d="M113.3 108.3 L139.6 102.6 L149.9 143.3 L126.6 156.8 Z" fill="#808080" stroke="#444" stroke-width="1"/>
<path d="M113.3 108.3 L139.6 102.6 L141 108 L115 114 Z" fill="#a5a5a5"/>
<!-- blue hoses -->
<path d="M146.8 101.0 C148.8 98.2 158.5 98.2 164.3 96.3 C170.1 94.4 188.3 88.0 196.1 85.1 C203.9 82.2 223.7 72.9 231.1 71.6 C238.5 70.3 254.6 72.4 259.8 74.0 C265.0 75.6 271.9 82.1 275.6 85.1 C279.3 88.1 287.9 96.3 291.6 99.5 C295.3 102.7 303.6 110.4 307.5 112.2 C311.4 114.0 322.6 110.9 324.6 114.6 L324.6 144.3 C320.7 147.2 298.2 141.4 291.6 139.3 C285.0 137.2 272.3 129.5 267.7 126.5 C263.1 123.5 255.0 115.7 251.8 113.8 C248.6 111.9 245.2 109.9 240.6 110.6 C236.0 111.3 219.0 117.9 212.0 120.1 C205.0 122.3 185.4 127.1 180.2 129.7 C175.0 132.3 170.2 140.5 167.4 142.4 C164.6 144.3 158.1 147.5 156.3 145.6 C154.5 143.7 152.7 129.5 151.6 126.5 C150.5 123.5 147.4 123.1 146.8 120.1 C146.2 117.1 144.8 103.8 146.8 101.0 Z" fill="#1a92d2" stroke="#0f5f99" stroke-width="1"/>
<path d="M164.3 118.6 C166.2 118.2 191.5 109.0 196.1 107.4 C200.7 105.8 230.0 95.8 232.7 94.7 C235.4 93.6 238.3 91.0 235.9 91.5 C233.5 92.0 200.7 101.1 196.1 102.6 C191.5 104.1 169.5 112.7 167.4 113.8 C165.3 114.9 162.4 119.0 164.3 118.6 Z" fill="#c8c8c8" stroke="#0f5f99" stroke-width="0.8"/>
<path d="M168 104 L230 80" stroke="#3fb6ec" stroke-width="3" opacity="0.8"/>
<path d="M170 124 L232 101" stroke="#3fb6ec" stroke-width="2.5" opacity="0.7"/>
<path d="M262 90 C275 98 290 115 305 124 C312 128 318 128 322 128" fill="none" stroke="#4cc4f2" stroke-width="4" opacity="0.8"/>
<path d="M150 102 L162 100 L164 121 L152 123 Z" fill="#1570aa"/><path d="M155 125 L168 122 L170 143 L158 146 Z" fill="#1570aa"/>
<path d="M140 115 L147 116 M144 134 L152 134" stroke="#ddd" stroke-width="2.2"/>
<!-- labels -->
<rect x="182" y="29" width="22" height="25.5" fill="#fff"/>
<text x="193" y="49" font-family="Liberation Sans" font-weight="bold" font-size="21" text-anchor="middle" fill="#000">2</text>
<path d="M192.5 54 L189 93" stroke="#fff" stroke-width="2.4"/><path d="M192.5 54 L189 93" stroke="#111" stroke-width="1"/>
<rect x="166.5" y="166" width="22" height="25.5" fill="#fff"/>
<text x="177.5" y="186" font-family="Liberation Sans" font-weight="bold" font-size="21" text-anchor="middle" fill="#000">1</text>
<path d="M186 126 L177.5 166" stroke="#fff" stroke-width="2.4"/><path d="M186 126 L177.5 166" stroke="#111" stroke-width="1"/>
<rect x="235.5" y="227.5" width="78" height="23" fill="#fff"/>
<rect x="238" y="230" width="73" height="18.5" fill="#fff" stroke="#555" stroke-width="1.2"/>
<text x="274.5" y="244" font-family="Liberation Sans" font-size="11" text-anchor="middle" fill="#555" textLength="55" lengthAdjust="spacingAndGlyphs">A20-10427</text>
<rect x="1" y="1" width="320" height="256" fill="none" stroke="#111" stroke-width="2.2"/>
</svg>
</div></div>
<div class="frame" style="left:1052px;top:740px;width:338px;height:275.4px"><div style="position:absolute;left:4.4px;top:4.7px;width:322px;height:259px;overflow:hidden"><svg width="322" height="259" viewBox="0 0 322 258" preserveAspectRatio="none">
<rect width="322" height="258" fill="#9c9c9c"/>
<!-- upper dark area -->
<path d="M25 0 H322 V210 Z" fill="#7a7a7a"/>
<path d="M100 0 H170 C165 15 150 25 130 25 C115 22 105 12 100 0 Z" fill="#868686"/>
<path d="M140 40 C160 30 190 35 210 55 C225 70 230 90 225 110 L180 80 Z" fill="#727272"/>
<!-- upper right light -->
<path d="M205 0 H322 V70 C300 65 280 55 262 40 C240 25 220 12 205 0 Z" fill="#a9a9a9"/>
<path d="M250 0 H322 V40 C300 35 275 20 250 0 Z" fill="#bdbdbd"/>
<path d="M262 40 C280 55 300 65 322 70" fill="none" stroke="#5a5a5a" stroke-width="1.2"/>
<path d="M290 80 L322 75 V150 L300 130 Z" fill="#8e8e8e"/>
<path d="M290 100 C300 110 312 130 322 160" fill="none" stroke="#c6c6c6" stroke-width="10"/>
<path d="M205 22 L210 18 M215 25 L222 20" stroke="#ccc" stroke-width="1.5"/>
<!-- grommet -->
<ellipse cx="262" cy="54" rx="19" ry="17" fill="#555"/>
<ellipse cx="255" cy="60" rx="11" ry="10" fill="#6c6c6c"/>
<!-- beam -->
<path d="M14 -2 H32 L290 175 L288 190 L262 198 L100 80 L38 42 L14 8 Z" fill="#a6a6a6"/>
<path d="M32 -2 L290 175" stroke="#454545" stroke-width="1.6"/>
<path d="M26 5 L286 183" stroke="#c8c8c8" stroke-width="1.4"/>
<path d="M22 12 L283 190" stroke="#666" stroke-width="0.9"/>
<path d="M38 42 L100 80 L262 198" fill="none" stroke="#6a6a6a" stroke-width="1.2"/>
<path d="M110 52 C135 70 155 85 175 98 L170 104 C150 92 130 80 108 62 Z" fill="#5d5d5d"/>
<path d="M120 64 L165 96" stroke="#2a2a2a" stroke-width="2"/>
<path d="M70 28 L76 26 L80 34 L74 36 Z M90 40 L95 38 L98 44 L93 46 Z" fill="#888"/>
<!-- beam end dark vertical face -->
<path d="M262 198 L288 186 L292 230 L282 258 H268 Z" fill="#6e6e6e"/>
<!-- lower engine clutter -->
<path d="M0 150 L2 38 L38 42 L100 80 L262 198 L268 258 H0 Z" fill="#a7a7a7"/>
<path d="M38 42 L100 80 L262 198 L250 206 L95 95 L35 60 Z" fill="#8c8c8c"/>
<path d="M30 120 L60 100 L95 110 L120 130 L110 150 L70 140 Z" fill="#979797"/>
<path d="M0 200 L30 185 L45 200 L40 240 L0 250 Z" fill="#8e8e8e"/>
<path d="M49 206 L100 200 L112 258 H46 Z" fill="#d6d6d6"/>
<path d="M60 240 C70 220 85 210 100 212" fill="none" stroke="#efefef" stroke-width="6"/>
<path d="M110 205 L150 215 L165 258 H118 Z" fill="#8a8a8a"/>
<g fill="none" stroke-linecap="round" stroke-linejoin="round">
<g stroke="#4a4a4a" stroke-width="5.2">
<path d="M10 257 L101 177"/>
<path d="M26 155 C32 150 40 148 47 154 C50 165 44 180 38 189 C33 198 30 208 30 218"/>
<path d="M61 184 C56 170 58 155 69 147 C80 142 95 142 103 161 C106 168 106 172 106 175"/>
<path d="M12 189 C13 178 20 170 28 171 C35 173 38 180 36 190 C34 196 28 200 22 200"/>
<path d="M95 138 C100 148 104 158 112 165 C122 172 128 185 129 207 C128 220 118 228 112 232 C108 240 106 250 106 258"/>
<path d="M5 175 C15 165 25 160 40 135 C50 120 65 112 80 118"/>
<path d="M70 200 C80 190 95 186 108 190"/>
<path d="M130 150 C145 160 150 175 148 195 C146 210 150 225 160 240"/>
<path d="M100 110 C115 105 130 112 142 122"/>
</g>
<g stroke="#c9c9c9" stroke-width="3.2">
<path d="M10 257 L101 177"/>
<path d="M26 155 C32 150 40 148 47 154 C50 165 44 180 38 189 C33 198 30 208 30 218"/>
<path d="M61 184 C56 170 58 155 69 147 C80 142 95 142 103 161 C106 168 106 172 106 175"/>
<path d="M12 189 C13 178 20 170 28 171 C35 173 38 180 36 190 C34 196 28 200 22 200"/>
<path d="M95 138 C100 148 104 158 112 165 C122 172 128 185 129 207 C128 220 118 228 112 232 C108 240 106 250 106 258"/>
<path d="M5 175 C15 165 25 160 40 135 C50 120 65 112 80 118"/>
<path d="M70 200 C80 190 95 186 108 190"/>
<path d="M130 150 C145 160 150 175 148 195 C146 210 150 225 160 240"/>
<path d="M100 110 C115 105 130 112 142 122"/>
</g>
<path d="M12 254 L99 178" stroke="#e6e6e6" stroke-width="1.2"/>
</g>
<path d="M14 195 L28 205 L24 222 L10 218 Z M44 212 L56 206 L60 222 L48 228 Z M20 235 L32 230 L35 246 L23 250 Z M70 175 L84 170 L88 184 L74 188 Z" fill="#7c7c7c" stroke="#3a3a3a" stroke-width="0.8"/>
<path d="M118 108 C125 98 140 98 144 108 C144 118 132 122 122 118 Z" fill="#4a4a4a"/>
<path d="M140 115 L165 135" stroke="#4a4a4a" stroke-width="5"/><path d="M140 115 L165 135" stroke="#d0d0d0" stroke-width="3"/>
<path d="M165 140 C185 150 200 165 210 180" fill="none" stroke="#4a4a4a" stroke-width="9"/>
<path d="M165 140 C185 150 200 165 210 180" fill="none" stroke="#c8c8c8" stroke-width="7"/>
<path d="M150 130 L170 125 L178 140 L158 148 Z" fill="#bdbdbd" stroke="#444" stroke-width="0.8"/>
<path d="M150 185 L170 178 L175 195 L155 200 Z" fill="#bdbdbd" stroke="#444" stroke-width="0.8"/>
<path d="M130 215 L160 205 L175 258 H140 Z" fill="#9a9a9a"/>
<!-- left drum -->
<path d="M0 12 C22 25 35 60 34 100 C32 125 20 140 0 150 Z" fill="#c4c4c4"/>
<path d="M0 60 C15 70 26 95 28 125" fill="none" stroke="#666" stroke-width="1.5"/>
<path d="M0 100 C10 110 18 130 18 145" fill="none" stroke="#777" stroke-width="1.2"/>
<!-- right lower region -->
<path d="M288 186 L322 170 V258 H282 L292 230 Z" fill="#9a9a9a"/>
<path d="M280 142 L312 128 L322 130 V188 L298 196 L280 170 Z" fill="#e4e4e4"/>
<circle cx="315" cy="150" r="11" fill="#7a7a7a"/>
<circle cx="305" cy="212" r="5" fill="#cccccc"/>
<!-- light tubes near lower hose -->
<path d="M200 200 L250 222" stroke="#cbcbcb" stroke-width="9"/>
<path d="M180 240 L215 258" stroke="#c0c0c0" stroke-width="8"/>
<!-- blue hoses top -->
<path d="M238 58 C230 70 222 85 218 100 C216 108 218 114 220 120" fill="none" stroke="#0f63a0" stroke-width="13"/>
<path d="M238 58 C230 70 222 85 218 100 C216 108 218 114 220 120" fill="none" stroke="#1c97d6" stroke-width="10.5"/>
<path d="M236 62 C228 74 222 88 220 100" fill="none" stroke="#4cc2f0" stroke-width="2.5"/>
<path d="M256 70 C248 80 240 92 236 100 C233 108 233 115 233 121" fill="none" stroke="#0f63a0" stroke-width="13"/>
<path d="M256 70 C248 80 240 92 236 100 C233 108 233 115 233 121" fill="none" stroke="#1c97d6" stroke-width="10.5"/>
<path d="M254 74 C246 83 240 94 238 102" fill="none" stroke="#4cc2f0" stroke-width="2.5"/>
<path d="M204 112 L216 110 L238 117 L244 126 L230 128 Z" fill="#1b8fd0"/>
<!-- blue hose bottom -->
<path d="M193 157 L228 213" stroke="#0f63a0" stroke-width="11" stroke-linecap="round"/>
<path d="M193 157 L228 213" stroke="#1c97d6" stroke-width="8.5" stroke-linecap="round"/>
<path d="M224 210 L248 196" stroke="#1c97d6" stroke-width="9" stroke-linecap="round"/>
<path d="M225 210 L238 230" stroke="#1b8fd0" stroke-width="5"/>
<!-- label leaders -->
<path d="M21 25 L24 57 L46 57" fill="none" stroke="#fff" stroke-width="2.4"/><path d="M21 25 L24 57 L46 57" fill="none" stroke="#111" stroke-width="1"/>
<path d="M17 22 L23 18 L27 23 L22 28 Z" fill="#1a8ec8"/>
<path d="M203 56 L222 57 L231 66" fill="none" stroke="#fff" stroke-width="2.4"/><path d="M203 56 L222 57 L231 66" fill="none" stroke="#111" stroke-width="1"/>
<path d="M279 95 L266 95 L255 86" fill="none" stroke="#fff" stroke-width="2.4"/><path d="M279 95 L266 95 L255 86" fill="none" stroke="#111" stroke-width="1"/>
<path d="M189 202 L200 202 L212 210" fill="none" stroke="#fff" stroke-width="2.4"/><path d="M189 202 L200 202 L212 210" fill="none" stroke="#111" stroke-width="1"/>
<path d="M189 237 L218 237 L228 228" fill="none" stroke="#fff" stroke-width="2.4"/><path d="M189 237 L218 237 L228 228" fill="none" stroke="#111" stroke-width="1"/>
<!-- labels -->
<rect x="46.5" y="42" width="18" height="23" fill="#fff"/>
<text x="55.5" y="61" font-family="Liberation Sans" font-weight="bold" font-size="20" text-anchor="middle" fill="#000">5</text>
<rect x="183.5" y="45" width="19.5" height="23.5" fill="#fff"/>
<text x="193.3" y="64" font-family="Liberation Sans" font-weight="bold" font-size="20" text-anchor="middle" fill="#000">1</text>
<rect x="279.5" y="83" width="18" height="23" fill="#fff"/>
<text x="288.5" y="102" font-family="Liberation Sans" font-weight="bold" font-size="20" text-anchor="middle" fill="#000">2</text>
<rect x="171.5" y="191" width="18" height="23" fill="#fff"/>
<text x="180.5" y="210" font-family="Liberation Sans" font-weight="bold" font-size="20" text-anchor="middle" fill="#000">4</text>
<rect x="171.5" y="225" width="18" height="24" fill="#fff"/>
<text x="180.5" y="244" font-family="Liberation Sans" font-weight="bold" font-size="20" text-anchor="middle" fill="#000">3</text>
<rect x="235.5" y="227.5" width="78" height="23" fill="#fff"/>
<rect x="238" y="230" width="73" height="18.5" fill="#fff" stroke="#555" stroke-width="1.2"/>
<text x="274.5" y="244" font-family="Liberation Sans" font-size="11" text-anchor="middle" fill="#555" textLength="55" lengthAdjust="spacingAndGlyphs">A10-11051</text>
<rect x="1" y="1" width="320" height="256" fill="none" stroke="#111" stroke-width="2.2"/>
</svg>
</div></div>
<div class="frame" style="left:1052px;top:1030.6px;width:338px;height:275.4px"><div style="position:absolute;left:4.4px;top:4.7px;width:322px;height:259px;overflow:hidden"><svg width="322" height="259" viewBox="0 0 322 258" preserveAspectRatio="none">
<rect width="322" height="258" fill="#9a9a9a"/>
<!-- left dark strip -->
<path d="M0 0 H20 V62 L0 72 Z" fill="#6a6a6a"/>
<!-- upper-middle area behind cap -->
<path d="M43 0 H120 V50 L125 95 L55 85 Z" fill="#b2b2b2"/>
<path d="M52 70 C60 85 80 92 100 92 C115 90 124 82 128 72 L128 95 L60 95 Z" fill="#8e8e8e"/>
<path d="M55 25 C60 15 75 12 90 14 C110 18 122 35 124 55 C122 75 110 86 92 88 C72 88 58 78 54 60 Z" fill="#a3a3a3" stroke="#5f5f5f" stroke-width="1.3"/>
<path d="M62 28 C75 20 100 20 112 35 L108 48 C100 52 80 50 62 45 Z" fill="#b4b4b4"/>
<path d="M80 45 L84 42 M90 44 L94 41 M78 56 L85 52 M86 60 L92 56" stroke="#555" stroke-width="1.2"/>
<path d="M46 40 L56 35 L58 60 L48 62 Z" fill="#d2d2d2"/>
<!-- right bracket -->
<path d="M117 0 H152 L148 30 L140 48 L125 50 L118 30 Z" fill="#d0d0d0"/>
<path d="M152 0 H192 L190 66 L150 60 L140 48 Z" fill="#9e9e9e"/>
<path d="M124 30 L145 34 L140 48 L126 47 Z" fill="#c0c0c0"/>
<!-- dark big shape top -->
<path d="M190 0 H245 L240 30 C232 50 215 62 195 65 L172 66 L188 40 Z" fill="#5e5e5e"/>
<!-- upper right mixed -->
<path d="M245 0 H322 V90 L270 80 L240 40 Z" fill="#a4a4a4"/>
<path d="M268 20 L300 25 L315 60 L290 75 L262 55 Z" fill="#8a8a8a"/>
<path d="M265 22 L275 18 L280 40 L270 42 Z" fill="#4a4a4a"/>
<path d="M250 45 L285 50 L290 65 L255 60 Z" fill="#cacaca"/>
<circle cx="302" cy="55" r="4" fill="#ddd"/>
<path d="M150 62 L190 66 L210 80 L205 98 L160 100 Z" fill="#a8a8a8"/>
<path d="M164 70 C168 66 176 68 176 74 C175 80 166 80 164 75 Z M180 74 C184 70 192 72 192 78 C190 84 182 84 180 79 Z" fill="none" stroke="#555" stroke-width="1.2"/>
<!-- thin gray pipe -->
<path d="M193 0 C200 15 208 30 218 42 C235 62 255 85 270 92 C285 96 305 80 314 62 C318 54 320 46 322 40" fill="none" stroke="#5d5d5d" stroke-width="9"/>
<path d="M193 0 C200 15 208 30 218 42 C235 62 255 85 270 92 C285 96 305 80 314 62 C318 54 320 46 322 40" fill="none" stroke="#a8a8a8" stroke-width="6.5"/>
<!-- light pipe right of coupler -->
<path d="M195 92 C225 85 260 80 300 78 L322 78 V112 L290 112 C260 115 235 120 200 132 Z" fill="#c6c6c6" stroke="#6a6a6a" stroke-width="1"/>
<path d="M215 92 L240 86 L245 68 L222 72 Z" fill="#bcbcbc"/>
<path d="M232 60 L258 56 C262 66 260 78 252 84 L236 86 Z" fill="#c2c2c2" stroke="#777" stroke-width="1"/>
<!-- big light pipe from left -->
<path d="M0 72 C10 76 20 82 26 86 C35 95 45 102 53 106 C70 113 85 117 95 117.5 L130 119 L137 134 C130 142 125 146 122 148 C110 156 100 161 95 162 C80 162 70 161 60 160 C45 156 35 152 26 148 C15 143 8 140 0 137 Z" fill="#d2d2d2" stroke="#777" stroke-width="1"/>
<path d="M5 105 C30 120 60 140 100 142" fill="none" stroke="#e6e6e6" stroke-width="8"/>
<!-- white pipe -->
<path d="M18 0 H44 V48 C46 60 53 74 66 82 C78 88 95 90 130 92 L130 112 C100 112 75 109 60 103 C40 95 26 83 21 68 C19 58 18 50 18 45 Z" fill="#ebebeb" stroke="#6e6e6e" stroke-width="1.2"/>
<path d="M24 0 V50 C26 68 38 88 62 97 C78 102 105 104 130 104" fill="none" stroke="#d2d2d2" stroke-width="4"/>
<!-- lower area -->
<path d="M0 137 C20 145 45 158 95 162 L122 148 L200 132 L322 112 V258 H0 Z" fill="#8e8e8e"/>
<path d="M0 150 L25 150 L25 258 H0 Z" fill="#8a8a8a"/>
<path d="M5 200 L20 195 L26 215 L10 220 Z" fill="#bdbdbd"/>
<!-- hose from dark seg down-left -->
<path d="M85 172 C60 180 35 195 28 220 C24 235 22 248 22 258" fill="none" stroke="#444" stroke-width="26"/>
<path d="M85 172 C60 180 35 195 28 220 C24 235 22 248 22 258" fill="none" stroke="#8a8a8a" stroke-width="23"/>
<!-- hose B under -->
<path d="M36 234 C48 220 65 210 90 208 C115 207 135 216 160 223 C175 227 200 226 230 222" fill="none" stroke="#444" stroke-width="26"/>
<path d="M36 234 C48 220 65 210 90 208 C115 207 135 216 160 223 C175 227 200 226 230 222" fill="none" stroke="#8f8f8f" stroke-width="23"/>
<path d="M62 206 C80 200 100 199 118 203" fill="none" stroke="#c8c8c8" stroke-width="3"/>
<path d="M70 222 L80 236 M76 219 L86 233" stroke="#eee" stroke-width="2.5"/>
<path d="M30 252 C60 258 120 258 160 255" fill="none" stroke="#c6c6c6" stroke-width="4"/>
<!-- hose F from coupler bottom -->
<path d="M128 140 C140 160 150 180 165 200" fill="none" stroke="#444" stroke-width="26"/>
<path d="M128 140 C140 160 150 180 165 200" fill="none" stroke="#939393" stroke-width="23"/>
<path d="M132 160 L155 150 M136 168 L158 158" stroke="#666" stroke-width="1.3"/>
<!-- long pipe C -->
<path d="M140 205 C170 210 200 208 240 200 C265 195 285 188 300 186" fill="none" stroke="#444" stroke-width="24"/>
<path d="M140 205 C170 210 200 208 240 200 C265 195 285 188 300 186" fill="none" stroke="#a2a2a2" stroke-width="21"/>
<path d="M170 202 C200 200 240 194 290 182" fill="none" stroke="#cacaca" stroke-width="3"/>
<!-- U hose D -->
<path d="M158 235 C175 250 195 258 215 250 C235 240 245 225 260 215" fill="none" stroke="#444" stroke-width="20"/>
<path d="M158 235 C175 250 195 258 215 250 C235 240 245 225 260 215" fill="none" stroke="#949494" stroke-width="17"/>
<!-- gray hose E & dark seg right -->
<path d="M190 150 C205 150 215 155 225 158" fill="none" stroke="#444" stroke-width="24"/>
<path d="M190 150 C205 150 215 155 225 158" fill="none" stroke="#9a9a9a" stroke-width="21"/>
<path d="M213 142 L236 136 L242 162 L218 170 Z" fill="#555" stroke="#222" stroke-width="1"/>
<path d="M232 134 L248 130 L256 158 L242 163 Z" fill="#e2e2e2" stroke="#333" stroke-width="1"/>
<path d="M212 175 L235 170 L240 185 L215 190 Z" fill="#d6d6d6"/>
<!-- right frame -->
<path d="M280 126 L322 120 V208 L298 208 C288 190 280 160 280 126 Z" fill="#b9b9b9" stroke="#555" stroke-width="1"/>
<path d="M292 136 L322 132 V195 L302 196 C296 180 292 160 292 136 Z" fill="#8a8a8a"/>
<!-- dark hose segment -->
<path d="M76 168 C80 160 92 156 104 162 L110 180 L100 192 C92 192 82 190 78 186 Z" fill="#525252" stroke="#222" stroke-width="1.2"/>
<!-- blue coupler -->
<path d="M130 110 C150 101 180 90 202 85.5 C207 95 211 110 212.5 124 C205 135 198 145 190 151 C180 152 168 153 157.5 154 C148 142 138 125 130 110 Z" fill="#1b94d4" stroke="#0f5f99" stroke-width="1.2"/>
<path d="M140 113 C160 105 185 96 198 93" fill="none" stroke="#58c8f2" stroke-width="4" opacity="0.85"/>
<path d="M168 112 C178 108 188 106 196 105" fill="none" stroke="#45b8ec" stroke-width="9" opacity="0.55"/>
<path d="M141 106 C148 122 156 140 164 153" fill="none" stroke="#e8e8e8" stroke-width="3.5"/>
<path d="M195 88 C200 100 206 115 210 130" fill="none" stroke="#e8e8e8" stroke-width="3"/>
<path d="M168 98 C172 115 176 132 180 150" fill="none" stroke="#137cbc" stroke-width="3"/>
<path d="M156 148 L168 146 L170 154 L158 156 Z" fill="#888"/>
<!-- labels -->
<rect x="120" y="46.5" width="21" height="26.5" fill="#fff"/>
<text x="130.5" y="67" font-family="Liberation Sans" font-weight="bold" font-size="21" text-anchor="middle" fill="#000">1</text>
<path d="M131 73 L143 105" stroke="#fff" stroke-width="2.4"/><path d="M131 73 L143 105" stroke="#111" stroke-width="1"/>
<rect x="166.5" y="35.5" width="22" height="26" fill="#fff"/>
<text x="177.5" y="56" font-family="Liberation Sans" font-weight="bold" font-size="21" text-anchor="middle" fill="#000">2</text>
<path d="M178 62 L187 96" stroke="#fff" stroke-width="2.4"/><path d="M178 62 L187 96" stroke="#111" stroke-width="1"/>
<rect x="235.5" y="228" width="78" height="23" fill="#fff"/>
<rect x="238" y="230.5" width="73" height="18.5" fill="#fff" stroke="#555" stroke-width="1.2"/>
<text x="274.5" y="244.5" font-family="Liberation Sans" font-size="11" text-anchor="middle" fill="#555" textLength="55" lengthAdjust="spacingAndGlyphs">A15-10661</text>
<rect x="1" y="1" width="320" height="256" fill="none" stroke="#111" stroke-width="2.2"/>
</svg>
</div></div>
</body></html>
